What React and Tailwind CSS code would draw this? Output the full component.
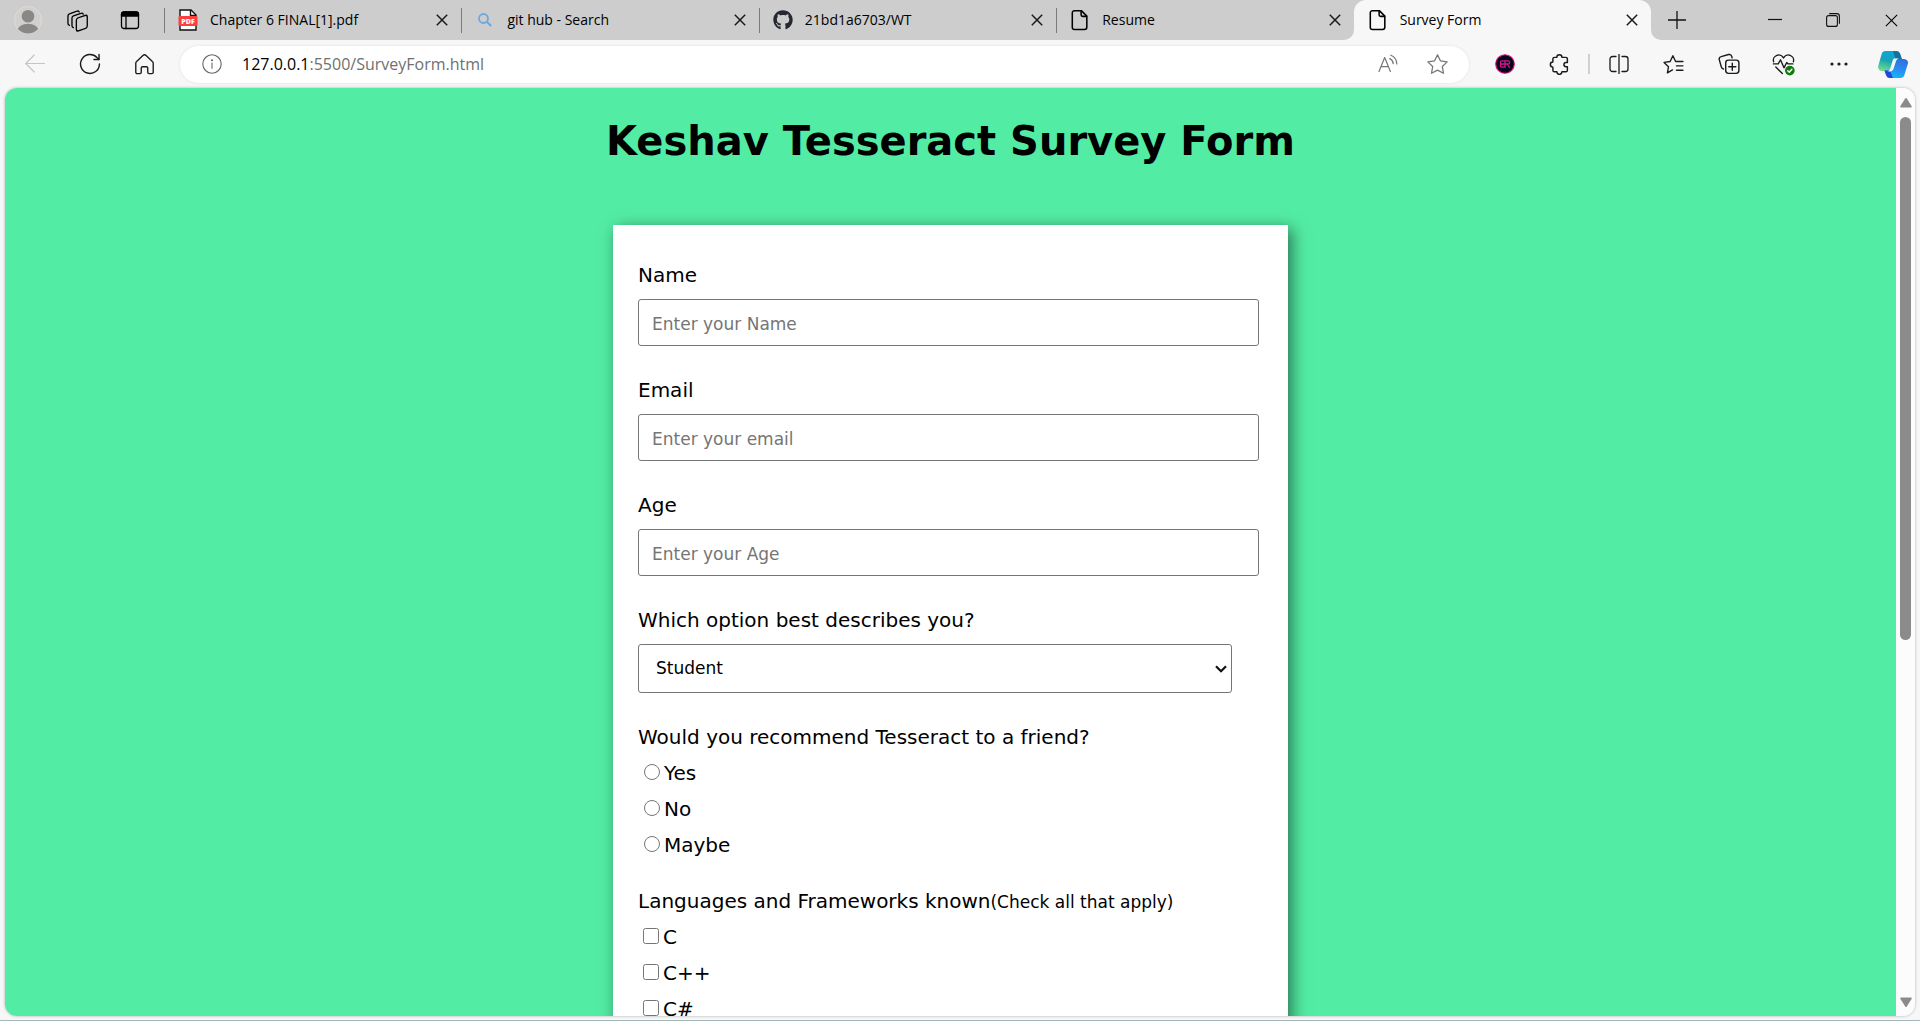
import { FaGithub } from "react-icons/fa";

const ui = "font-['Open_Sans','Noto_Sans',sans-serif]";

function Icon({ size = 20, w = 1.2, children, className = "" }) {
  return (
    <svg
      width={size}
      height={size}
      viewBox="0 0 20 20"
      fill="none"
      stroke="currentColor"
      strokeWidth={w}
      strokeLinecap="round"
      strokeLinejoin="round"
      className={className}
      aria-hidden="true"
    >
      {children}
    </svg>
  );
}

const PageIcon = () => (
  <Icon size={22} w={1.4}>
    <path d="M5 1.5h6.2l5 5v10.2a2 2 0 0 1-2 2H5a2 2 0 0 1-2-2V3.500a2 2 0 0 1 2-2z" />
    <path d="M11 1.700v3.500a1.500 1.500 0 0 0 1.500 1.500H16" />
  </Icon>
);

const PdfIcon = () => (
  <svg width="20" height="22" viewBox="0 0 20 22" aria-hidden="true">
    <path d="M2 1h11l5 5v15H2z" fill="#fff" stroke="#111" strokeWidth="1.400" />
    <path d="M12.500 1v5.500H18" fill="none" stroke="#111" strokeWidth="1.400" />
    <rect x="0.500" y="7" width="19" height="10" rx="1" fill="#fb3f3f" />
    <text x="10" y="14.600" textAnchor="middle" fontSize="7" fontWeight="800" fill="#fff" fontFamily="Open Sans, sans-serif">
      PDF
    </text>
  </svg>
);

const SearchIcon = () => (
  <svg width="16" height="16" viewBox="0 0 16 16" fill="none" stroke="#6fa8dc" strokeWidth="1.800" aria-hidden="true">
    <circle cx="6.500" cy="6.500" r="4.500" />
    <path d="M9.800 9.800l4.400 4.200" strokeWidth="2.200" />
  </svg>
);

function CloseIcon({ size = 12, w = 1.5 }) {
  return (
    <svg width={size} height={size} viewBox="0 0 12 12" fill="none" stroke="currentColor" strokeWidth={w} aria-hidden="true">
      <path d="M.8.800l10.400 10.400M11.200.800L.8 11.200" />
    </svg>
  );
}

const tabs = [
  { title: "Chapter 6 FINAL[1].pdf", icon: <PdfIcon /> },
  { title: "git hub - Search", icon: <SearchIcon /> },
  { title: "21bd1a6703/WT", icon: <FaGithub size={20} color="#24292f" /> },
  { title: "Resume", icon: <PageIcon /> },
  { title: "Survey Form", icon: <PageIcon />, active: true },
];

function Tab({ title, icon, active }) {
  return (
    <div
      className={
        active
          ? "relative flex h-10 min-w-0 flex-[0_1_298px] items-center rounded-t-xl bg-[#f7f7f7] pr-[13px] pl-3"
          : "relative flex h-10 min-w-0 flex-[0_1_298px] items-center border-l-2 border-transparent pr-[13px] pl-[10px]"
      }
    >
      {active ? (
        <>
          <span className="absolute bottom-0 -left-[10px] size-[10px] bg-[#f7f7f7]">
            <span className="block size-full rounded-br-[10px] bg-[#cdcdcd]" />
          </span>
          <span className="absolute -right-[10px] bottom-0 size-[10px] bg-[#f7f7f7]">
            <span className="block size-full rounded-bl-[10px] bg-[#cdcdcd]" />
          </span>
        </>
      ) : (
        <span className="absolute top-2 -left-[2px] h-[25px] w-px bg-[#7a7a7a]" />
      )}
      <span className="flex w-6 shrink-0 justify-center">{icon}</span>
      <span className="ml-[10px] flex-1 truncate text-sm text-black">{title}</span>
      <button type="button" aria-label={"Close " + title} className="shrink-0 text-[#1a1a1a]">
        <CloseIcon />
      </button>
    </div>
  );
}

function ToolButton({ label, children, className = "w-[55px] text-[#1b1b1b]" }) {
  return (
    <button type="button" aria-label={label} className={"flex h-10 shrink-0 items-center justify-center " + className}>
      {children}
    </button>
  );
}

function TabBar() {
  return (
    <header className="flex h-10 shrink-0 items-center bg-[#cdcdcd]">
      <div className="flex w-[164px] shrink-0 items-center pl-[14px]">
        <button type="button" aria-label="Profile">
          <svg width="28" height="28" viewBox="0 0 28 28" aria-hidden="true">
            <defs>
              <clipPath id="avatar">
                <circle cx="14" cy="14" r="13.500" />
              </clipPath>
            </defs>
            <circle cx="14" cy="14" r="13.500" fill="#d2d0ce" stroke="#dedcda" />
            <g clipPath="url(#avatar)" fill="#8a8886">
              <circle cx="14" cy="10.200" r="6.300" />
              <ellipse cx="14" cy="24.500" rx="10.500" ry="6.700" />
            </g>
          </svg>
        </button>
        <button type="button" aria-label="Workspaces" className="ml-6">
          <Icon size={23} w={1.15}>
            <rect x="9" y="6.500" width="9.500" height="11.500" rx="2" transform="skewY(-18) translate(0 4.500)" />
            <path d="M6.400 16.200a2 2 0 0 1-1.200-1.900V7.800a2 2 0 0 1 1.300-1.800L13 3.800a1.600 1.600 0 0 1 2 .7" />
            <path d="M3 14.200a2 2 0 0 1-1.300-1.900V6a2 2 0 0 1 1.300-1.800l6.500-2.300a1.600 1.600 0 0 1 2 .7" />
          </Icon>
        </button>
        <button type="button" aria-label="Tab actions" className="ml-[31px]">
          <Icon w={1.3}>
            <rect x="1.500" y="2" width="17" height="16.500" rx="2.500" />
            <path d="M1.500 6V4.500A2.500 2.500 0 0 1 4 2h12a2.500 2.500 0 0 1 2.500 2.500V6z" fill="currentColor" />
            <path d="M6 6v12.500" />
          </Icon>
        </button>
      </div>
      <nav aria-label="Tabs" className="flex min-w-0 flex-[0_1_1487px]">
        {tabs.map((t) => (
          <Tab key={t.title} {...t} />
        ))}
      </nav>
      <button type="button" aria-label="New tab" className="ml-[17px] shrink-0">
        <svg width="18" height="18" viewBox="0 0 18 18" stroke="#111" strokeWidth="1.300" aria-hidden="true">
          <path d="M9 0v18M0 9h18" />
        </svg>
      </button>
      <div className="ml-auto flex shrink-0">
        <button type="button" aria-label="Minimize" className="flex h-10 w-[58px] items-center justify-center">
          <svg width="14" height="12" viewBox="0 0 14 12" stroke="#111" strokeWidth="1.200" aria-hidden="true">
            <path d="M0 5.500h14" />
          </svg>
        </button>
        <button type="button" aria-label="Restore" className="flex h-10 w-[58px] items-center justify-center">
          <svg width="14" height="14" viewBox="0 0 14 14" fill="none" stroke="#111" strokeWidth="1.100" aria-hidden="true">
            <rect x=".6" y="2.600" width="10.800" height="10.800" rx="2" />
            <path d="M3.200.600h7.600a2.600 2.600 0 0 1 2.600 2.600v7.600" />
          </svg>
        </button>
        <button type="button" aria-label="Close window" className="flex h-10 w-[58px] items-center justify-center">
          <CloseIcon size={13} w={1} />
        </button>
      </div>
    </header>
  );
}

const starPath = "M10 1.600l2.600 5.300 5.800.800-4.200 4.100 1 5.800-5.200-2.700-5.200 2.700 1-5.800L1.600 7.700l5.800-.8z";

function Toolbar() {
  return (
    <div className="flex h-12 shrink-0 items-center bg-[#f7f7f7] pl-[7px]">
      <ToolButton label="Back" className="w-[55px] text-[#c4c4c4]">
        <Icon w={1.1}>
          <path d="M19.500 9.500H.8M9.200 1L.7 9.500l8.500 8.500" />
        </Icon>
      </ToolButton>
      <ToolButton label="Refresh">
        <Icon size={22} w={1.3}>
          <path d="M18.600 10a8.600 8.600 0 1 1-2.300-5.900L18 5.800" />
          <path d="M18.200 1.300v4.600h-4.600" />
        </Icon>
      </ToolButton>
      <ToolButton label="Home">
        <Icon size={21} w={1.3}>
          <path d="M1.700 8.800a2.200 2.200 0 0 1 .8-1.700l6-5.600a2.200 2.200 0 0 1 3 0l6 5.600a2.200 2.200 0 0 1 .8 1.700v8.600a1.300 1.300 0 0 1-1.300 1.300h-2.600a1.300 1.300 0 0 1-1.300-1.300v-4a1.300 1.300 0 0 0-1.300-1.300H8.200a1.300 1.300 0 0 0-1.300 1.300v4a1.300 1.300 0 0 1-1.300 1.300H3a1.300 1.300 0 0 1-1.300-1.300z" />
        </Icon>
      </ToolButton>
      <div className="ml-2 flex h-[37px] min-w-0 flex-1 items-center rounded-full bg-white pr-[20px] pl-[22px] shadow-[0_0_3px_rgba(0,0,0,0.1)]">
        <button type="button" aria-label="View site information" className="shrink-0 text-[#666]">
          <Icon w={1.1}>
            <circle cx="10" cy="10" r="9.200" />
            <path d="M10 9v5.200" />
            <circle cx="10" cy="6.200" r=".5" fill="currentColor" />
          </Icon>
        </button>
        <a href="#survey" className="ml-5 flex-1 truncate text-base text-[#707070]">
          <span className="text-black">127.0.0.1</span>:5500/SurveyForm.html
        </a>
        <button type="button" aria-label="Read aloud" className="shrink-0 text-[#767676]">
          <Icon w={1.2}>
            <path d="M1 17.500L6.700 3.500l5.700 14M3 12.700h7.400" />
            <path d="M11.800 4.600a6 6 0 0 1 3.400 5M12.800 1.200a9.500 9.500 0 0 1 6 8.800" />
          </Icon>
        </button>
        <button type="button" aria-label="Add to favorites" className="ml-[28px] shrink-0 text-[#767676]">
          <Icon size={23} w={1.1}>
            <path d={starPath} />
          </Icon>
        </button>
      </div>
      <div className="ml-2 flex shrink-0 items-center">
        <ToolButton label="Extension">
          <svg width="20" height="20" viewBox="0 0 20 20" aria-hidden="true">
            <circle cx="10" cy="10" r="9.300" fill="#06061c" stroke="#e5127d" strokeWidth="1.100" />
            <g fill="none" stroke="#d3168c" strokeWidth="1.300">
              <path d="M9.800 6.800H7a1.600 1.600 0 0 0 0 3.200h2.800M7 10a1.600 1.600 0 0 0 0 3.200h2.800M10 6.200v7.600" />
              <path d="M10 6.800h3a1.600 1.600 0 0 1 0 3.200h-3M12.300 10l2.500 3.800" />
            </g>
          </svg>
        </ToolButton>
        <ToolButton label="Extensions">
          <Icon size={21} w={1.4}>
            <path d="M7.500 3.200a2.400 2.400 0 0 1 4.800 0H16a1.500 1.500 0 0 1 1.500 1.500V8h-1.200a2.100 2.100 0 0 0 0 4.200h1.200v3.300A1.500 1.500 0 0 1 16 17h-3.700a2.400 2.400 0 0 1-4.800 0H5.200a1.500 1.500 0 0 1-1.500-1.500v-3a2.400 2.400 0 0 1 0-4.800v-3a1.500 1.500 0 0 1 1.500-1.500z" />
          </Icon>
        </ToolButton>
        <span className="mx-px h-5 w-[2px] bg-[#d0d0d0]" />
        <ToolButton label="Split screen">
          <Icon w={1.3}>
            <path d="M7 2.500H3.500a2.500 2.500 0 0 0-2.500 2.500v10a2.500 2.500 0 0 0 2.500 2.500H7M13 2.500h3.500a2.500 2.500 0 0 1 2.500 2.500v10a2.500 2.500 0 0 1-2.500 2.500H13M10 .5v19" />
          </Icon>
        </ToolButton>
        <ToolButton label="Favorites">
          <Icon size={21} w={1.3}>
            <path d="M9 15.200L4.200 18l1-5.800L1 8l5.800-.9L9.400 1.600 12 7.100h7M12.800 11.300H19M12.800 15.500H19" />
          </Icon>
        </ToolButton>
        <ToolButton label="Collections">
          <Icon size={22} w={1.3}>
            <path d="M5 14.500A2.500 2.500 0 0 1 3 12.600L1.200 6.200A2.400 2.400 0 0 1 2.900 3.300L9.600 1.400a2.400 2.400 0 0 1 2.900 1.700l.3 1.200" />
            <rect x="7" y="6.500" width="12" height="12" rx="2.500" />
            <path d="M13 9.300v6.400M9.800 12.500h6.400" />
          </Icon>
        </ToolButton>
        <ToolButton label="Browser essentials">
          <Icon size={23} w={1.2}>
            <path d="M1.400 7.600A4.600 4.600 0 0 1 10 4.400a4.600 4.600 0 0 1 8.600 3.200M3.300 12.200l5.700 5.600M1.200 9.500h4.200l2-3.600 3 7 2.400-4.600 1.200 1.200h4.200" />
            <circle cx="15.500" cy="15.300" r="4.200" fill="#107c10" stroke="none" />
            <path d="M13.700 15.400l1.300 1.300 2.300-2.500" stroke="#fff" />
          </Icon>
        </ToolButton>
        <ToolButton label="Settings and more">
          <Icon>
            <g fill="currentColor" stroke="none">
              <circle cx="3" cy="10" r="1.600" />
              <circle cx="10" cy="10" r="1.600" />
              <circle cx="17" cy="10" r="1.600" />
            </g>
          </Icon>
        </ToolButton>
        <ToolButton label="Copilot" className="w-[54px]">
          <svg width="30" height="29" viewBox="0 0 30 29" aria-hidden="true">
            <defs>
              <linearGradient id="cpA" x1="0.600" y1="0" x2="0.300" y2="1">
                <stop offset="0" stopColor="#0aa5e0" />
                <stop offset="0.500" stopColor="#19a4b4" />
                <stop offset="1" stopColor="#6fdc8c" />
              </linearGradient>
              <linearGradient id="cpB" x1="0.700" y1="0" x2="0.300" y2="1">
                <stop offset="0" stopColor="#2f6fe0" />
                <stop offset="0.500" stopColor="#2a8df0" />
                <stop offset="1" stopColor="#13bdf6" />
              </linearGradient>
            </defs>
            <path d="M7.500 1H18a4 4 0 0 1 3.700 2.700L23.500 9H19a4 4 0 0 0-3.800 2.800l-2 6.400A4 4 0 0 1 9.500 21H4a4 4 0 0 1-3.800-5L3.700 3.800A4 4 0 0 1 7.500 1z" fill="url(#cpA)" />
            <path d="M15 1h3.500a4 4 0 0 1 3.700 2.700L24 9h-4.500a3 3 0 0 1-2.700-2z" fill="#17719f" />
            <path d="M22.500 28H12a4 4 0 0 1-3.700-2.700L6.500 20.500H10a4.500 4.500 0 0 0 4.300-3.300l1.700-5.700A4 4 0 0 1 19.800 9H26a3.800 3.800 0 0 1 3.800 5l-3.500 11.200A4 4 0 0 1 22.500 28z" fill="url(#cpB)" />
            <path d="M15 28h-3.500a4 4 0 0 1-3.400-2.700L6.500 20.500h3.600c1.300 0 2.200.8 2.600 2z" fill="#1f47d8" />
            <path d="M16 8.500h5c-1.800.3-2.600 1.500-3.100 3.100l-2.100 6.400C15.100 20.200 14 21.500 12 21.500H9.200c1.700-.2 2.600-1.400 3.100-3l1.900-6.600C14.700 10.100 15.200 8.900 16 8.500z" fill="#f7f7f7" />
          </svg>
        </ToolButton>
      </div>
    </div>
  );
}

function TextField({ id, label, placeholder, type = "text" }) {
  return (
    <div className="mb-8">
      <label htmlFor={id} className="mb-3 block leading-6">
        {label}
      </label>
      <input
        id={id}
        type={type}
        placeholder={placeholder}
        className="block h-[47px] w-full max-w-[621px] rounded-[3px] border border-[#767676] bg-white px-[13px] pt-[3px] text-[17px] placeholder:text-[#757575]"
      />
    </div>
  );
}

function SurveyForm() {
  return (
    <form
      id="survey"
      className="mx-auto w-full max-w-[675px] bg-white px-[25px] pt-[38px] pb-10 text-xl shadow-[4px_4px_15px_rgba(0,0,0,0.5)]"
    >
      <TextField id="name" label="Name" placeholder="Enter your Name" />
      <TextField id="email" label="Email" placeholder="Enter your email" type="email" />
      <TextField id="age" label="Age" placeholder="Enter your Age" />
      <div className="mb-8">
        <label htmlFor="role" className="mb-3 block leading-6">
          Which option best describes you?
        </label>
        <div className="relative w-[95%]">
          <select id="role" className="block h-[49px] w-full appearance-none rounded-[3px] border border-[#767676] bg-white px-[17px] pt-px text-[17px] text-black">
            <option>Student</option>
          </select>
          <svg width="12" height="8" viewBox="0 0 12 8" fill="none" stroke="#101010" strokeWidth="2.200" className="pointer-events-none absolute top-[21px] right-[5px]" aria-hidden="true">
            <path d="M1 1.200l5 5 5-5" />
          </svg>
        </div>
      </div>
      <fieldset className="mb-[26px]">
        <legend className="mb-[6px] block leading-6">Would you recommend Tesseract to a friend?</legend>
        {["Yes", "No", "Maybe"].map((o) => (
          <label key={o} className="flex h-9 items-center">
            <input type="radio" name="recommend" className="mr-1 mb-[2px] ml-[6px] size-4" />
            {o}
          </label>
        ))}
      </fieldset>
      <fieldset>
        <legend className="mb-[6px] block h-6 leading-6">
          Languages and Frameworks known<span className="text-[17px] leading-none">(Check all that apply)</span>
        </legend>
        {["C", "C++", "C#"].map((o) => (
          <label key={o} className="flex h-9 items-center">
            <input type="checkbox" name="languages" className="mr-1 mb-[2px] ml-[5px] size-4" />
            {o}
          </label>
        ))}
      </fieldset>
    </form>
  );
}

function Scrollbar() {
  return (
    <div className="flex w-[19px] shrink-0 flex-col items-center bg-[#fcfcfc] pt-[10px] pb-[9px]">
      <svg width="12" height="10" viewBox="0 0 12 10" fill="#8b8b8b" aria-hidden="true">
        <path d="M5.200.600a1 1 0 0 1 1.600 0l4.900 7.600A1 1 0 0 1 10.900 9.500H1.100A1 1 0 0 1 .3 8.200z" />
      </svg>
      <div className="mt-[9px] mb-[9px] w-full flex-1 px-1">
        <div className="h-[60%] w-[11px] rounded-full bg-[#8b8b8b]" />
      </div>
      <svg width="12" height="10" viewBox="0 0 12 10" fill="#8b8b8b" aria-hidden="true">
        <path d="M5.200 9.400a1 1 0 0 0 1.600 0l4.900-7.600A1 1 0 0 0 10.900.500H1.100A1 1 0 0 0 .3 1.800z" />
      </svg>
    </div>
  );
}

export default function App() {
  return (
    <div className={"flex h-screen flex-col overflow-hidden border-b border-[#a3b8b8] bg-[#f7f7f7] " + ui}>
      <TabBar />
      <Toolbar />
      <div className="mx-[5px] mb-1 flex min-h-0 flex-1 overflow-hidden rounded-xl shadow-[0_0_3px_rgba(0,0,0,0.3)]">
        <main className="min-w-0 flex-1 overflow-hidden bg-[#53eca4] pt-[29px] font-['Verdana','DejaVu_Sans',sans-serif] text-black">
          <h1 className="mb-[60px] text-center text-[40px] leading-[48px] font-bold">Keshav Tesseract Survey Form</h1>
          <SurveyForm />
        </main>
        <Scrollbar />
      </div>
    </div>
  );
}
